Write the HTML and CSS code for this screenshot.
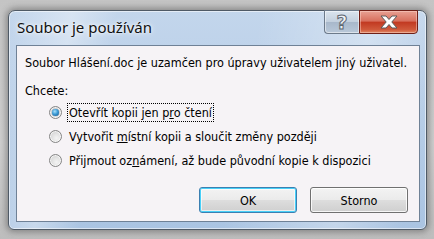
FILE: index.html
```html
<!DOCTYPE html>
<html lang="cs">
<head>
<meta charset="utf-8">
<title>Soubor je používán</title>
<link rel="stylesheet" href="styles.css">
</head>
<body>
<div class="window">
  <div class="titlebar">
    <div class="title">Soubor je používán</div>
    <div class="caption-buttons">
      <div class="cap-btn help"><span class="help-glyph">?</span></div>
      <div class="cap-btn close">
        <svg width="20" height="14" viewBox="0 0 20 14">
          <path d="M2 1 H7 L10 4.5 L13 1 H18 L12.8 7 L18 13 H13 L10 9.5 L7 13 H2 L7.2 7 Z" fill="#ffffff" stroke="#5a5a5a" stroke-width="1" stroke-linejoin="round"/>
        </svg>
      </div>
    </div>
  </div>
  <div class="panel">
    <p class="msg">Soubor Hlášení.doc je uzamčen pro úpravy uživatelem jiný uživatel.</p>
    <p class="ask">Chcete:</p>
    <div class="options">
      <div class="option">
        <span class="radio checked"><span class="dot"></span></span>
        <span class="label focus">Otevřít kopii jen p<u>r</u>o čtení</span>
      </div>
      <div class="option">
        <span class="radio"></span>
        <span class="label">Vytvořit <u>m</u>ístní kopii a sloučit změny později</span>
      </div>
      <div class="option">
        <span class="radio"></span>
        <span class="label">Přijmout oz<u>n</u>ámení, až bude původní kopie k dispozici</span>
      </div>
    </div>
    <div class="buttons">
      <div class="btn default">OK</div>
      <div class="btn">Storno</div>
    </div>
  </div>
</div>
</body>
</html>
```
FILE: styles.css
```css
html, body {
  margin: 0;
  padding: 0;
}
body {
  width: 434px;
  height: 239px;
  overflow: hidden;
  background: linear-gradient(180deg, #c4c4c4 0%, #cfcfcf 60%, #bdbdbd 100%);
  padding-top: 10px;
  box-sizing: border-box;
  font-family: "DejaVu Sans Condensed", "DejaVu Sans", sans-serif;
}
.window {
  margin-left: 8px;
  width: 419px;
  height: 220px;
  box-sizing: border-box;
  border: 1px solid #4f5a66;
  border-radius: 7px 7px 6px 6px;
  background:
    linear-gradient(100deg, rgba(255,255,255,0) 0%, rgba(255,255,255,0.35) 14%, rgba(255,255,255,0) 24%, rgba(255,255,255,0) 55%, rgba(255,255,255,0.3) 80%, rgba(255,255,255,0) 95%),
    linear-gradient(180deg, #c3d6ec 0%, #aac4e2 100%);
  box-shadow: 0 0 6px 2px rgba(60,60,60,0.45), inset 0 0 0 1px rgba(255,255,255,0.55);
  display: flex;
  flex-direction: column;
}
.titlebar {
  height: 34px;
  display: flex;
  justify-content: space-between;
  align-items: flex-start;
  padding-left: 8px;
}
.title {
  font-family: "Noto Sans", "Open Sans", sans-serif;
  font-size: 15px;
  line-height: 15px;
  color: #111;
  margin-top: 9px;
  text-shadow: 0 0 6px rgba(255,255,255,0.9), 0 0 3px rgba(255,255,255,0.9);
}
.caption-buttons {
  display: flex;
  margin-right: 8px;
  margin-top: -1px;
}
.cap-btn {
  height: 24px;
  box-sizing: border-box;
  display: flex;
  align-items: center;
  justify-content: center;
}
.help {
  width: 35px;
  border: 1px solid #6c7a8a;
  border-right: none;
  border-radius: 0 0 0 4px;
  background: linear-gradient(180deg, #dae4ee 0%, #c3d0de 48%, #a8b8cb 52%, #b9c8d9 100%);
  box-shadow: inset 0 0 0 1px rgba(255,255,255,0.5);
}
.help-glyph {
  font-family: "DejaVu Sans", sans-serif;
  font-weight: bold;
  font-size: 19px;
  line-height: 19px;
  color: #eef2f6;
  -webkit-text-stroke: 1px #5e6670;
  margin-top: 1px;
}
.close {
  width: 59px;
  border: 1px solid #6f1f17;
  border-radius: 0 0 4px 0;
  background: linear-gradient(180deg, #e8a193 0%, #d8705e 45%, #c23a22 52%, #d05a3c 85%, #e08a66 100%);
  box-shadow: inset 0 0 0 1px rgba(255,220,210,0.45);
}
.panel {
  margin: 0 6px 7px 7px;
  flex: 1;
  border: 1px solid #6f8196;
  background: #f6f3f6;
  padding: 9px 8px 8px 8px;
  display: flex;
  flex-direction: column;
  font-size: 12.5px;
  color: #000;
}
.msg {
  margin: 0;
  line-height: 16px;
  white-space: nowrap;
}
.ask {
  margin: 12px 0 0 0;
  line-height: 16px;
}
.options {
  margin: 4px 0 0 24px;
  display: flex;
  flex-direction: column;
  gap: 6px;
}
.option {
  height: 18px;
  display: flex;
  align-items: center;
}
.radio {
  width: 13px;
  height: 13px;
  box-sizing: border-box;
  border-radius: 50%;
  border: 1px solid #858585;
  background: radial-gradient(circle at 60% 65%, #f4f4f4 0%, #dedede 55%, #c8c8c8 100%);
  box-shadow: inset 0 0 0 1px rgba(255,255,255,0.7);
  display: flex;
  align-items: center;
  justify-content: center;
  margin-right: 5px;
  flex: none;
}
.radio .dot {
  width: 7px;
  height: 7px;
  border-radius: 50%;
  background: radial-gradient(circle at 40% 35%, #a9e0fb 0%, #3c9bd6 45%, #104e86 100%);
  box-shadow: 0 0 1px #0b3a66;
}
.label {
  padding: 1px 1px;
  line-height: 15px;
  border: 1px solid transparent;
  white-space: nowrap;
}
.label.focus {
  border: 1px dotted #000;
}
.buttons {
  margin-top: auto;
  display: flex;
  justify-content: flex-end;
  gap: 13px;
  margin-right: 3px;
}
.btn {
  width: 98px;
  height: 26px;
  box-sizing: border-box;
  border: 1px solid #707070;
  border-radius: 3px;
  background: linear-gradient(180deg, #f3f3f3 0%, #ebebeb 48%, #dddddd 52%, #cfcfcf 100%);
  box-shadow: inset 0 0 0 1px rgba(255,255,255,0.8);
  display: flex;
  align-items: center;
  justify-content: center;
  font-size: 12.5px;
}
.btn.default {
  border-color: #3c7fb1;
  box-shadow: inset 0 0 0 1px #48d0f8, inset 0 0 0 2px rgba(255,255,255,0.6);
}
```
